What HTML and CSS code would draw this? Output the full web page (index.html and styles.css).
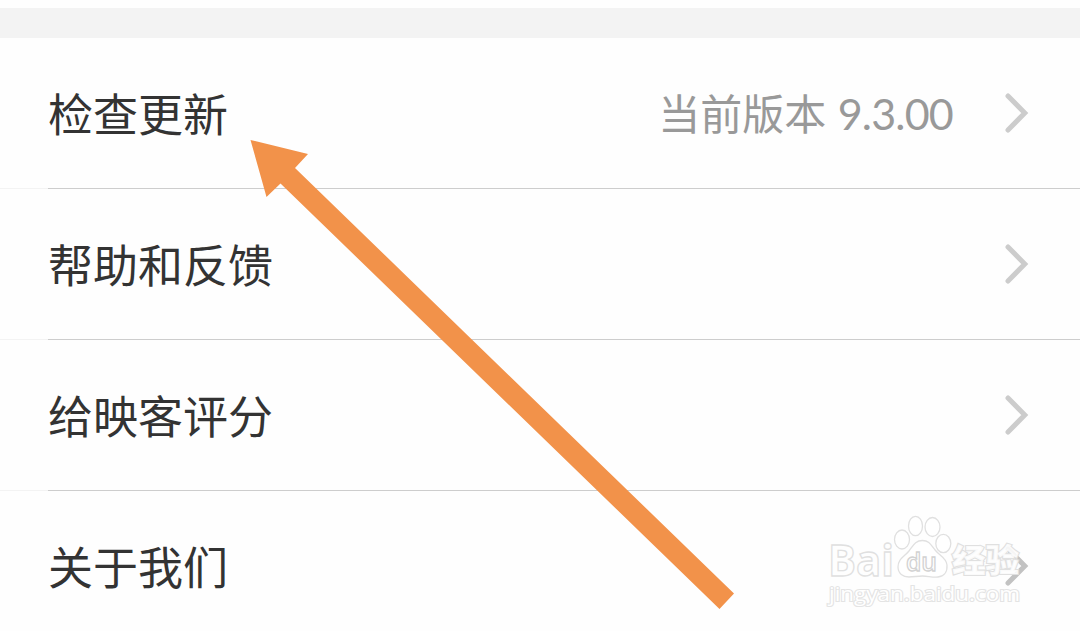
FILE: index.html
```html
<!DOCTYPE html>
<html lang="zh-CN">
    <head>
        <meta charset="UTF-8">
        <meta name="viewport" content="width=device-width, initial-scale=1.0">
        <title>设置</title>
        <link rel="stylesheet" href="styles.css">
    </head>
    <body>

        <div class="page">
            <div class="section-gap"></div>
            <ul class="settings-list">
                <li class="settings-item">
                    <span class="label">检查更新</span>
                    <span class="version">当前版本 <span class="number">9.3.00</span></span>
                    <svg class="chevron" viewBox="0 0 24 42"><path d="M3 4 19.800 21 3 38" /></svg>
                </li>
                <li class="settings-item">
                    <span class="label">帮助和反馈</span>
                    <svg class="chevron" viewBox="0 0 24 42"><path d="M3 4 19.800 21 3 38" /></svg>
                </li>
                <li class="settings-item">
                    <span class="label">给映客评分</span>
                    <svg class="chevron" viewBox="0 0 24 42"><path d="M3 4 19.800 21 3 38" /></svg>
                </li>
                <li class="settings-item">
                    <span class="label">关于我们</span>
                    <svg class="chevron dark" viewBox="0 0 24 42"><path d="M3 4 19.800 21 3 38" /></svg>
                </li>
            </ul>

            <!-- arrow pointing at the first item -->
            <svg class="arrow" viewBox="0 0 484 469">
                <path d="M0.5 0 58 14 45 28 484 453.5 469.5 469 30.5 43.5 16.5 57Z" />
            </svg>

            <!-- watermark -->
            <svg class="watermark" viewBox="0 0 200 100">
                <text class="wm-bold" x="3" y="60.500" font-size="43" textLength="66" lengthAdjust="spacingAndGlyphs">Bai</text>
                <ellipse cx="77" cy="24.5" rx="7.5" ry="9.5" />
                <ellipse cx="90.5" cy="11" rx="7" ry="9.7" />
                <ellipse cx="107.5" cy="12" rx="7.5" ry="9.5" />
                <ellipse cx="118.3" cy="28.5" rx="7.5" ry="9.2" />
                <path d="M97.500 25.500C90 25.500 88 31 84 36C79 42 73 44 73 52C73 58.500 78 62 84 62C89 62 92 61 97.500 61C103 61 107 62.500 113 62C119 61.500 122.500 57 122 50C121.500 43 115 41 110.500 35.500C106 30 104.500 25.500 97.500 25.500Z" />
                <text class="wm-du" x="81" y="56" font-size="25" textLength="31" lengthAdjust="spacingAndGlyphs">du</text>
                <text class="wm-cjk" x="127" y="57" font-size="32" textLength="67" lengthAdjust="spacingAndGlyphs">经验</text>
                <text class="wm-url" x="4" y="86" font-size="20.5" textLength="191" lengthAdjust="spacingAndGlyphs">jingyan.baidu.com</text>
            </svg>
        </div>

    </body>
</html>
```
FILE: styles.css
```css
* {
    box-sizing: border-box;
}

body {
    margin: 0;
    background-color: #fefefe;
    font-family: "Noto Sans CJK SC", sans-serif;
}

.page {
    position: relative;
    height: 631px;
    padding-top: 8px;
    overflow: hidden;
}

.section-gap {
    height: 30px;
    background-color: #f3f3f3;
}

.settings-list {
    margin: 0;
    padding: 0;
    list-style: none;
}

.settings-item {
    display: flex;
    align-items: center;
    height: 151px;
    padding: 0 51px 1px 48px;
    background: linear-gradient(to right, #f3f3f3 48px, #cdcdcd 48px) bottom / 100% 1px no-repeat;
}

.label {
    flex: 1;
    font-size: 45px;
    line-height: 66px;
    color: #333;
}

.version {
    margin-right: 52px;
    font-size: 42px;
    line-height: 62px;
    color: #999;
}

.number {
    margin-left: 2px;
    font-family: Lato, sans-serif;
    font-size: 43px;
    letter-spacing: -0.8px;
}

.chevron {
    width: 24px;
    height: 42px;
    fill: none;
    stroke: #ccc;
    stroke-width: 5;
    stroke-linecap: round;
}

.chevron.dark {
    stroke: #c2c2c2;
}

.arrow {
    position: absolute;
    left: 250px;
    top: 140px;
    width: 484px;
    height: 469px;
    fill: #f2924a;
}

.watermark {
    position: absolute;
    left: 825px;
    top: 515px;
    width: 200px;
    height: 100px;
    fill: #fff;
    fill-opacity: 0.6;
    stroke: #e0e0e0;
    stroke-width: 1.3;
}

.wm-bold {
    font-family: "Open Sans", sans-serif;
    font-weight: bold;
}

.wm-du {
    font-family: "Open Sans", sans-serif;
    font-weight: 600;
    stroke: #d2d2d2;
}

.wm-cjk {
    font-family: "Noto Sans CJK SC", sans-serif;
    font-weight: 900;
    fill-opacity: 0.85;
    paint-order: stroke;
    stroke-width: 2.2;
}

.wm-url {
    font-family: "Open Sans", sans-serif;
    fill-opacity: 1;
    stroke: #e4e4e4;
    paint-order: stroke;
    stroke-width: 2.2;
}
```
